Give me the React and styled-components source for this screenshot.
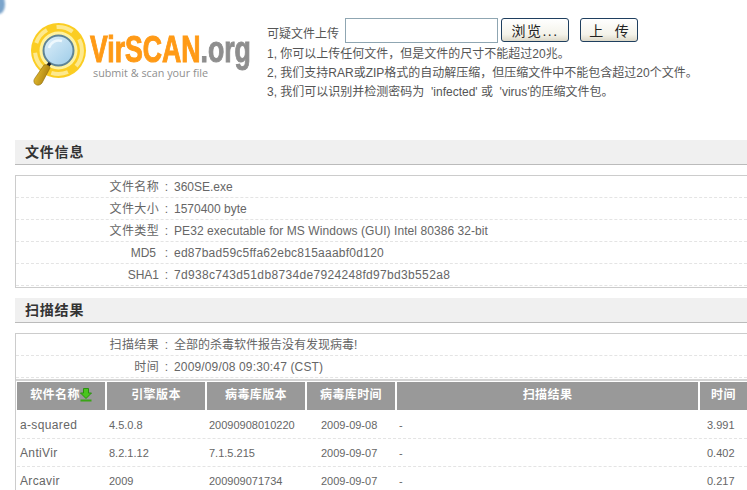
import React from 'react';
import styled, { createGlobalStyle } from 'styled-components';

const GlobalStyle = createGlobalStyle`
  html, body {
    margin: 0;
    padding: 0;
    background: #fff;
    overflow: hidden;
  }
  body {
    width: 747px;
    height: 490px;
    font-family: "Liberation Sans", "Noto Sans CJK SC", sans-serif;
    font-size: 12px;
    color: #666;
  }
`;

const Page = styled.div`
  position: relative;
  width: 747px;
  height: 490px;
  overflow: hidden;
`;

const Corner = styled.div`
  position: absolute;
  left: -6px;
  top: -6px;
  width: 11px;
  height: 20px;
  border-radius: 50%;
  background: #7ba4cb;
  filter: blur(1px);
`;

const Top = styled.div`
  display: flex;
  height: 140px;
  box-sizing: border-box;
  padding-top: 16px;
`;

const Logo = styled.div`
  display: flex;
  flex: none;
  box-sizing: border-box;
  width: 267px;
  height: 80px;
  padding: 7px 0 0 31px;
`;

const LogoText = styled.div`
  display: flex;
  flex-direction: column;
  width: 159px;
  margin: 11px 0 0 3px;
`;

const Wordmark = styled.div`
  width: 159px;
  font-weight: 700;
  font-size: 36px;
  line-height: 32px;
  color: #ff9a16;
  white-space: nowrap;
  transform: scaleX(0.74);
  transform-origin: left center;
  -webkit-text-stroke: 1px currentColor;
  span { color: #8e8e8e; }
`;

const Tagline = styled.div`
  font-family: "Open Sans", sans-serif;
  font-size: 10.8px;
  line-height: 13px;
  color: #8f8f8f;
  margin: 0 0 0 3px;
  white-space: nowrap;
`;

const Upload = styled.div`
  display: flex;
  flex-direction: column;
`;

const UploadRow = styled.form`
  display: flex;
  align-items: flex-end;
  height: 27px;
  margin-bottom: 2px;
  color: #555;
`;

const UploadLabel = styled.span`
  margin-bottom: 2px;
`;

const FileInput = styled.div`
  width: 151px;
  height: 23px;
  border: 1px solid #8fa6b2;
  margin-left: 6px;
`;

const Btn = styled.button`
  box-sizing: border-box;
  height: 24px;
  width: ${p => p.$w}px;
  margin: 0 0 1px ${p => p.$ml}px;
  padding: 0;
  border: 1px solid #1f3f5f;
  border-radius: 3px;
  background: linear-gradient(#fff, #f4f3ea 70%, #dcd8c8);
  font: 14px "Liberation Sans", "Noto Sans CJK SC", sans-serif;
  letter-spacing: ${p => p.$ls || 0};
  color: #222;
`;

const Note = styled.div`
  font-size: 12px;
  line-height: 19px;
  color: #555;
  white-space: nowrap;
`;

const SectionBar = styled.h2`
  margin: 0 0 10px 15px;
  height: 25px;
  box-sizing: border-box;
  background: #f0f0f0;
  border-bottom: 1px solid #bbb;
  padding-left: 10px;
  font-size: 14px;
  font-weight: 700;
  line-height: 24px;
  letter-spacing: 0.8px;
  color: #333;
`;

const Box = styled.div`
  margin: 0 0 ${p => p.$mb || 0}px 15px;
  border: 1px solid #ccc;
  border-right: none;
  padding-bottom: ${p => p.$pb || 0}px;
`;

const InfoRow = styled.div`
  display: flex;
  height: 22px;
  line-height: 22px;
  box-sizing: border-box;
  border-bottom: 1px dashed #e4e4e4;
  white-space: nowrap;
`;

const InfoLabel = styled.div`
  box-sizing: border-box;
  width: 143px;
  padding-right: ${p => p.$pr || 0}px;
  text-align: right;
  flex: none;
  letter-spacing: ${p => (p.$latin ? 0 : '0.35px')};
`;

const InfoColon = styled.div`
  width: 15px;
  text-align: center;
  flex: none;
`;

const InfoValue = styled.div`
  letter-spacing: ${p => p.$ls || 0}px;
`;

const ResultTable = styled.div`
  margin-top: 1px;
  padding: 1px 0 0 1px;
  border-top: 2px solid #d4d4d4;
`;

const Row = styled.div`
  display: flex;
  height: 28px;
  line-height: 28px;
  box-sizing: border-box;
  border-bottom: 1px dashed #e4e4e4;
  white-space: nowrap;
`;

const HeadRow = styled.div`
  display: flex;
  gap: 2px;
  height: 28px;
  margin-bottom: 1px;
`;

const HeadCell = styled.div`
  flex: none;
  width: ${p => p.$w}px;
  background: #999;
  color: #fff;
  font-weight: 700;
  font-size: 12px;
  line-height: 26px;
  text-align: center;
  letter-spacing: 0.4px;
`;

const Cell = styled.div`
  flex: none;
  box-sizing: border-box;
  width: ${p => p.$w}px;
  padding-left: ${p => p.$pl}px;
  font-size: ${p => (p.$name ? 12 : 11)}px;
  letter-spacing: ${p => (p.$name ? '0.35px' : 0)};
`;

const SortIcon = () => (
  <svg width="12" height="14" viewBox="0 0 12 14" style={{ verticalAlign: '-3px' }}>
    <path d="M3.5 0.5h5v4.5h3L6 10.5 0.5 5h3z" fill="#49c51e" stroke="#2b8f10" />
    <rect x="0.5" y="11.5" width="11" height="2" fill="#3aa516" />
  </svg>
);

const LogoMark = () => (
  <svg width="56" height="66" viewBox="0 0 56 66" style={{ flex: 'none' }}>
    <defs>
      <linearGradient id="lens" x1="0" y1="0" x2="1" y2="1">
        <stop offset="0" stopColor="#dff0fa" />
        <stop offset="1" stopColor="#9ccbe8" />
      </linearGradient>
      <linearGradient id="handle" x1="0" y1="0" x2="1" y2="0.4">
        <stop offset="0" stopColor="#f0c838" />
        <stop offset="1" stopColor="#a97f0e" />
      </linearGradient>
    </defs>
    <circle cx="27.5" cy="27.5" r="27.5" fill="#fbcd22" />
    <circle cx="27.5" cy="27.5" r="23.5" fill="none" stroke="#fde98f" strokeWidth="4" strokeDasharray="17 10" />
    <circle cx="27.5" cy="27.5" r="19" fill="#fff2a0" />
    <circle cx="27.5" cy="27.5" r="15" fill="url(#lens)" stroke="#5f8496" strokeWidth="2" />
    <path d="M18 25a10 10 0 0 1 13-7" fill="none" stroke="#eef8fd" strokeWidth="2.5" />
    <path d="M19 40l-3 4" stroke="#222" strokeWidth="3.5" />
    <path d="M13 42c3-1 6 1 6 3l-8 15c-2 3-7 3-8-1-.5-2 .5-3 1-4z" fill="url(#handle)" stroke="#8d6a0a" strokeWidth="0.6" />
  </svg>
);

const rows = [
  ['a-squared', '4.5.0.8', '20090908010220', '2009-09-08', '-', '3.991'],
  ['AntiVir', '8.2.1.12', '7.1.5.215', '2009-09-07', '-', '0.402'],
  ['Arcavir', '2009', '200909071734', '2009-09-07', '-', '0.217'],
];

const widths = [88, 98, 98, 88, 301, 47];

const App = () => (
  <Page>
    <GlobalStyle />
    <Corner />
    <Top>
      <Logo>
        <LogoMark />
        <LogoText>
          <Wordmark>VirSCAN<span>.org</span></Wordmark>
          <Tagline>submit &amp; scan your file</Tagline>
        </LogoText>
      </Logo>
      <Upload>
        <UploadRow>
          <UploadLabel>可疑文件上传</UploadLabel>
          <FileInput />
          <Btn type="button" $w={68} $ml={3} $ls="1.5px">浏览...</Btn>
          <Btn type="button" $w={58} $ml={11}>上&nbsp;&nbsp;&nbsp;传</Btn>
        </UploadRow>
        <Note>1, 你可以上传任何文件，但是文件的尺寸不能超过20兆。</Note>
        <Note>2, 我们支持RAR或ZIP格式的自动解压缩，但压缩文件中不能包含超过20个文件。</Note>
        <Note>3, 我们可以识别并检测密码为 &nbsp;'infected' 或 &nbsp;'virus'的压缩文件包。</Note>
      </Upload>
    </Top>

    <SectionBar>文件信息</SectionBar>
    <Box $mb={10} $pb={1}>
      <InfoRow><InfoLabel>文件名称</InfoLabel><InfoColon>:</InfoColon><InfoValue>360SE.exe</InfoValue></InfoRow>
      <InfoRow><InfoLabel>文件大小</InfoLabel><InfoColon>:</InfoColon><InfoValue>1570400 byte</InfoValue></InfoRow>
      <InfoRow><InfoLabel>文件类型</InfoLabel><InfoColon>:</InfoColon><InfoValue $ls={0.07}>PE32 executable for MS Windows (GUI) Intel 80386 32-bit</InfoValue></InfoRow>
      <InfoRow><InfoLabel $latin $pr={3}>MD5</InfoLabel><InfoColon>:</InfoColon><InfoValue $ls={0.25}>ed87bad59c5ffa62ebc815aaabf0d120</InfoValue></InfoRow>
      <InfoRow><InfoLabel $latin>SHA1</InfoLabel><InfoColon>:</InfoColon><InfoValue $ls={0.33}>7d938c743d51db8734de7924248fd97bd3b552a8</InfoValue></InfoRow>
    </Box>

    <SectionBar>扫描结果</SectionBar>
    <Box>
      <InfoRow><InfoLabel>扫描结果</InfoLabel><InfoColon>:</InfoColon><InfoValue>全部的杀毒软件报告没有发现病毒!</InfoValue></InfoRow>
      <InfoRow><InfoLabel>时间</InfoLabel><InfoColon>:</InfoColon><InfoValue $ls={0.15}>2009/09/08 09:30:47 (CST)</InfoValue></InfoRow>
      <ResultTable>
        <HeadRow>
          <HeadCell $w={88}>软件名称<SortIcon /></HeadCell>
          <HeadCell $w={98}>引擎版本</HeadCell>
          <HeadCell $w={98}>病毒库版本</HeadCell>
          <HeadCell $w={88}>病毒库时间</HeadCell>
          <HeadCell $w={301}>扫描结果</HeadCell>
          <HeadCell $w={47}>时间</HeadCell>
        </HeadRow>
        {rows.map(r => (
          <Row key={r[0]}>
            {r.map((v, i) => (
              <Cell key={i} $name={i === 0} $w={widths[i] + 2} $pl={i === 0 ? 3 : i === 3 ? 14 : i === 5 ? 7 : 2}>{v}</Cell>
            ))}
          </Row>
        ))}
      </ResultTable>
    </Box>
  </Page>
);

export default App;
